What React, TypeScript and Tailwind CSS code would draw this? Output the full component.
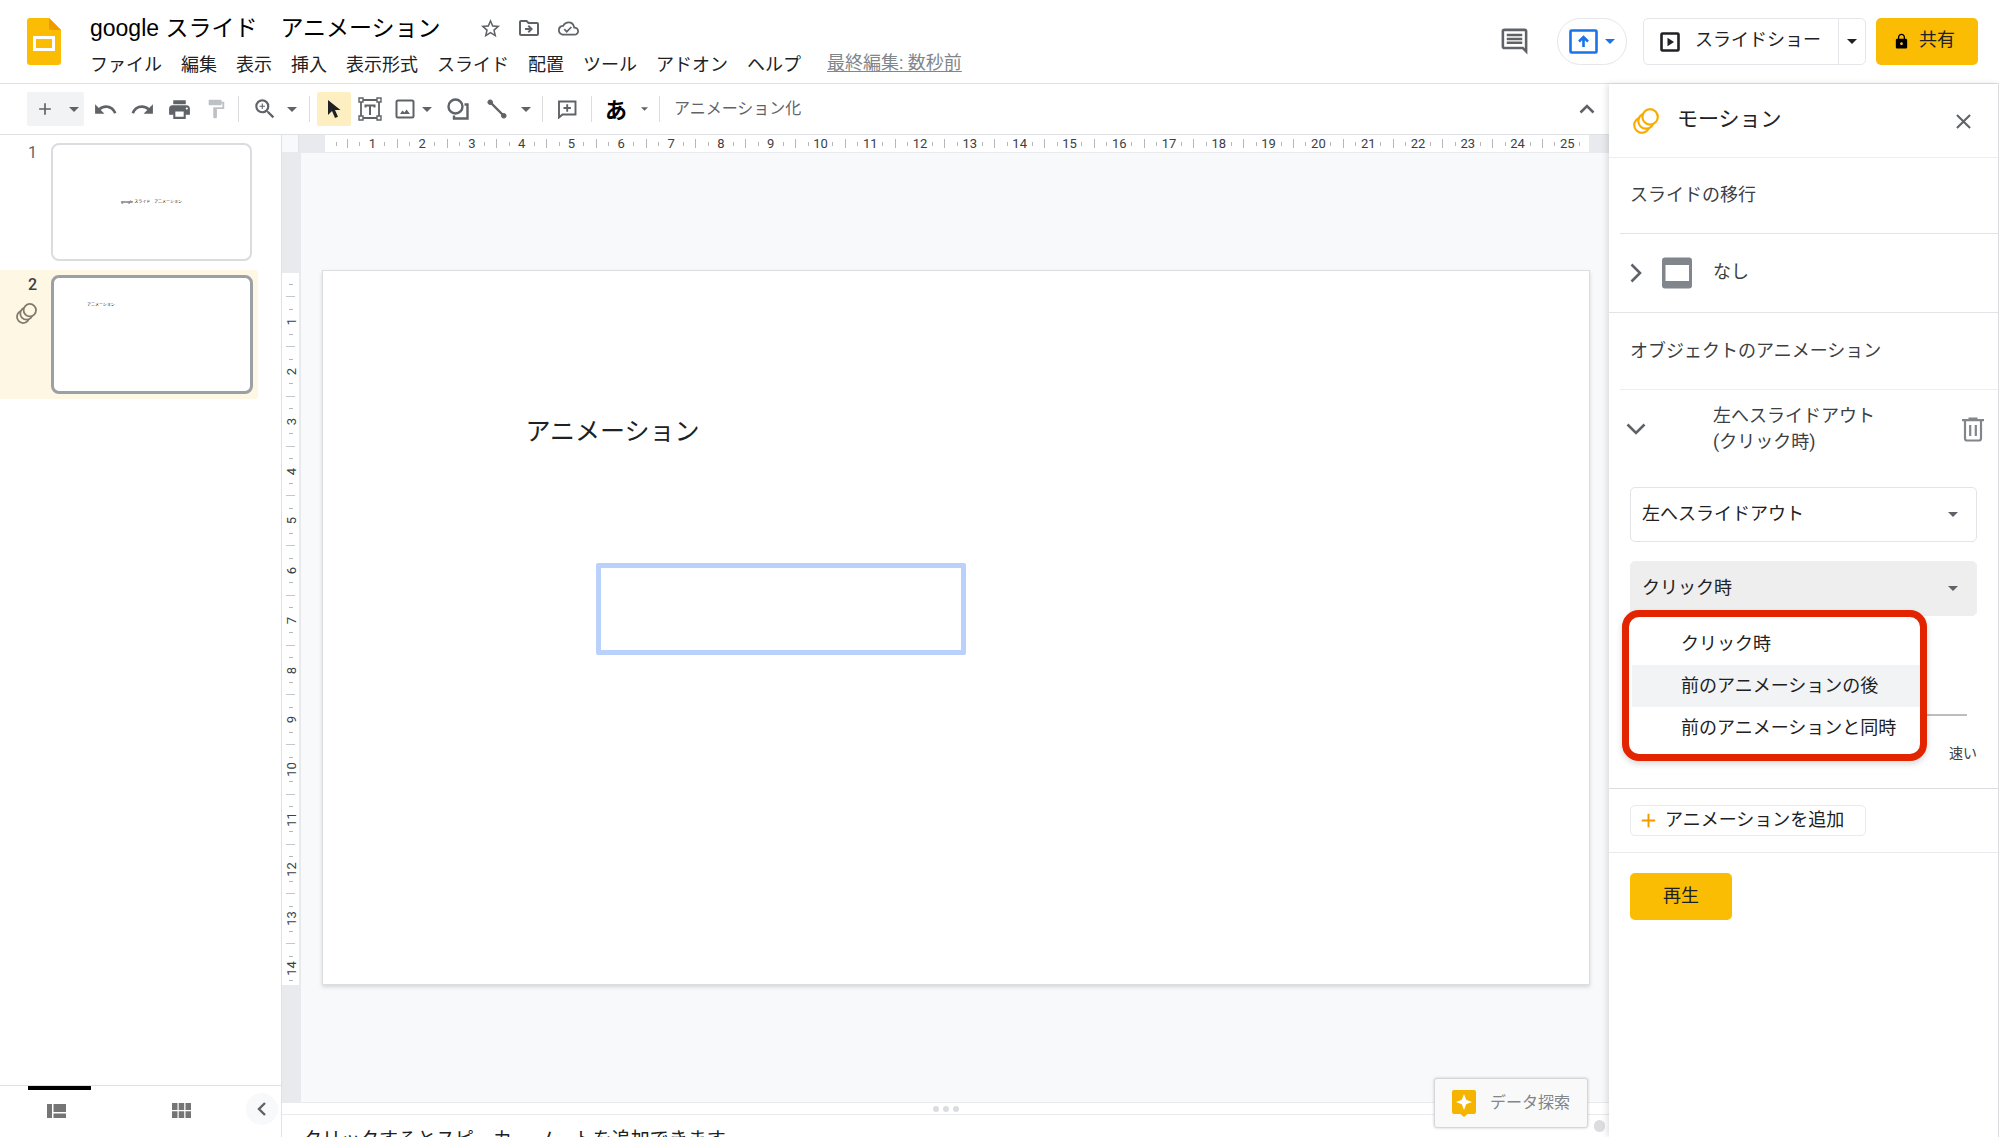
import React from "react";
import {
  MdAdd,
  MdClose,
  MdFormatPaint,
  MdLock,
  MdOutlineCloudDone,
  MdOutlineComment,
  MdOutlineDriveFileMove,
  MdPrint,
  MdRedo,
  MdStarBorder,
  MdUndo,
  MdZoomIn,
} from "react-icons/md";

function Caret({ className = "" }: { className?: string }) {
  return (
    <svg viewBox="0 0 10 5" className={`h-[5px] w-[10px] ${className}`} fill="currentColor" aria-hidden="true">
      <path d="M0 0h10L5 5z" />
    </svg>
  );
}

function SlidesLogo() {
  return (
    <svg viewBox="0 0 34 47" className="h-[47px] w-[34px] shrink-0" aria-label="スライド">
      <path d="M3 0h19l12 12v32a3 3 0 0 1-3 3H3a3 3 0 0 1-3-3V3a3 3 0 0 1 3-3z" fill="#fbbc04" />
      <path d="M22 0l12 12H24a2 2 0 0 1-2-2z" fill="#f29900" />
      <path d="M6 18h22v15H6zM9 21v9h16v-9z" fill="#fff" fillRule="evenodd" />
    </svg>
  );
}

function MotionIcon({ className = "" }: { className?: string }) {
  return (
    <svg viewBox="0 0 26 26" className={className} stroke="currentColor" strokeWidth="2.2" aria-hidden="true">
      <circle cx="8.9" cy="17.1" r="7.7" />
      <circle cx="13" cy="13" r="7.7" />
      <circle cx="17.1" cy="8.9" r="7.7" />
    </svg>
  );
}

function Separator({ className = "" }: { className?: string }) {
  return <span className={`h-[26px] w-px shrink-0 bg-[#dadce0] ${className}`} />;
}

function Tool({ label, className, children }: { label: string; className: string; children: React.ReactNode }) {
  return (
    <button type="button" aria-label={label} className={`flex h-[34px] shrink-0 items-center justify-center rounded-[2px] ${className}`}>
      {children}
    </button>
  );
}

const menus = ["ファイル", "編集", "表示", "挿入", "表示形式", "スライド", "配置", "ツール", "アドオン", "ヘルプ"];

function Header() {
  return (
    <header className="flex border-b border-[#dfe1e5] pr-[21px] pl-[27px]">
      <div className="pt-[18px]">
        <SlidesLogo />
      </div>
      <div className="ml-[29px] pt-3 pb-[6px]">
        <div className="flex h-8 items-center text-[#5f6368]">
          <h1 className="mr-[38px] font-['Liberation_Sans','Noto_Sans_CJK_JP',sans-serif] text-[23px] leading-8 whitespace-pre text-black">
            google スライド　アニメーション
          </h1>
          <button type="button" aria-label="スターを付ける" className="mr-[15px]">
            <MdStarBorder size={23} />
          </button>
          <button type="button" aria-label="移動" className="mr-[17px]">
            <MdOutlineDriveFileMove size={24} />
          </button>
          <button type="button" aria-label="保存状況">
            <MdOutlineCloudDone size={21} />
          </button>
        </div>
        <nav className="mt-[9px] flex h-6 items-center gap-[19px] text-[18px] leading-6 whitespace-nowrap text-[#202124]">
          {menus.map((m) => (
            <button type="button" key={m}>
              {m}
            </button>
          ))}
          <a href="#history" className="mb-[5px] ml-[7px] text-[#80868b] underline underline-offset-2">
            最終編集: 数秒前
          </a>
        </nav>
      </div>
      <div className="mt-[18px] ml-auto flex h-[47px] items-center">
        <button type="button" aria-label="コメント履歴" className="mr-[27px] text-[#5f6368]">
          <MdOutlineComment size={31} />
        </button>
        <button type="button" aria-label="会議で画面を共有" className="mr-[16px] flex h-full w-[70px] items-center justify-center gap-[7px] rounded-full border border-[#e4e6e9] text-[#1a73e8]">
          <svg viewBox="0 0 29 25" className="h-[25px] w-[29px]" fill="none" stroke="currentColor" strokeWidth="2.6" aria-hidden="true">
            <rect x="1.5" y="1.5" width="26" height="22" rx="1" />
            <path d="M14.500 18V8M10 12.500l4.500-4.500 4.500 4.500" />
          </svg>
          <Caret />
        </button>
        <div className="mr-[10px] flex h-full w-[223px] rounded-[5px] border border-[#e4e6e9] text-[#202124]">
          <button type="button" className="flex flex-1 items-center gap-[15px] pl-[16px] text-[18px] leading-6 whitespace-nowrap">
            <svg viewBox="0 0 20 20" className="h-5 w-5" fill="none" stroke="currentColor" strokeWidth="2.6" aria-hidden="true">
              <rect x="1.500" y="1.500" width="17" height="17" rx="1" />
              <path d="M7.500 5.800v8.400l6.500-4.200z" fill="currentColor" stroke="none" />
            </svg>
            <span className="pb-[4px]">スライドショー</span>
          </button>
          <button type="button" aria-label="スライドショーのオプション" className="flex w-[27px] items-center justify-center border-l border-[#e4e6e9]">
            <Caret />
          </button>
        </div>
        <button type="button" className="flex h-full w-[102px] items-center justify-center gap-[9px] rounded-[5px] bg-[#fbbc04] pr-[6px] text-[18px] leading-6 text-[#202124]">
          <MdLock size={17} className="text-black" />
          <span className="pb-[4px]">共有</span>
        </button>
      </div>
    </header>
  );
}

function Toolbar() {
  return (
    <div className="flex h-[51px] shrink-0 items-center border-b border-[#dfe1e5] pl-[27px] text-[#5f6368]">
      <div className="mr-[3px] flex w-[57px] rounded-[2px] bg-[#f1f3f4]">
        <Tool label="新しいスライド" className="w-[36px]">
          <MdAdd size={20} />
        </Tool>
        <Tool label="レイアウト" className="w-[21px]">
          <Caret />
        </Tool>
      </div>
      <Tool label="元に戻す" className="w-[37px]">
        <MdUndo size={25} />
      </Tool>
      <Tool label="やり直し" className="w-[37px]">
        <MdRedo size={25} />
      </Tool>
      <Tool label="印刷" className="w-[36px]">
        <MdPrint size={25} />
      </Tool>
      <Tool label="書式の貼り付け" className="w-[37px] text-[#bdc1c6]">
        <MdFormatPaint size={22} />
      </Tool>
      <Separator className="mr-[8px] ml-[4px]" />
      <Tool label="ズーム" className="w-[36px]">
        <MdZoomIn size={26} />
      </Tool>
      <Tool label="ズームのオプション" className="w-[18px]">
        <Caret />
      </Tool>
      <Separator className="mr-[7px] ml-[8px]" />
      <Tool label="選択" className="w-[34px] bg-[#feefc3] text-[#202124]">
        <svg viewBox="0 0 14 20" className="h-5 w-[14px]" fill="currentColor" aria-hidden="true">
          <path d="M1 1v15l4-4 3 7 3-1.300-3-6.700h5.500z" />
        </svg>
      </Tool>
      <Tool label="テキスト ボックス" className="w-[38px]">
        <svg viewBox="0 0 24 24" className="h-6 w-6" fill="none" stroke="currentColor" aria-hidden="true">
          <path d="M3 3h18v18H3z" strokeWidth="1.800" />
          <path d="M7 8.500h10M12 8.500V18M7.500 7.500v3M16.500 7.500v3" strokeWidth="2" />
          <path d="M1 1h4v4H1zM19 1h4v4h-4zM1 19h4v4H1zM19 19h4v4h-4z" fill="#fff" strokeWidth="1.400" />
        </svg>
      </Tool>
      <Tool label="画像を挿入" className="w-[32px]">
        <svg viewBox="0 0 20 20" className="h-5 w-5" fill="none" stroke="currentColor" strokeWidth="2" aria-hidden="true">
          <rect x="1.500" y="1.500" width="17" height="17" rx="1.500" />
          <path d="M5 15l2.500-3.500 2 2 2-3 3.500 4.500z" fill="currentColor" stroke="none" />
        </svg>
      </Tool>
      <Tool label="画像のオプション" className="w-[12px]">
        <Caret />
      </Tool>
      <Tool label="図形" className="w-[50px]">
        <svg viewBox="0 0 22 22" className="h-[22px] w-[22px]" fill="none" stroke="currentColor" strokeWidth="2.400" aria-hidden="true">
          <circle cx="8.500" cy="8.500" r="7" />
          <path d="M17.500 6.500H20.500V20.500H7v-3" />
        </svg>
      </Tool>
      <Tool label="線" className="w-[27px]">
        <svg viewBox="0 0 20 20" className="h-5 w-5" fill="currentColor" stroke="currentColor" aria-hidden="true">
          <path d="M3 3l14 14" strokeWidth="2.400" />
          <circle cx="3.200" cy="3.200" r="2.300" />
          <circle cx="16.800" cy="16.800" r="2.300" />
        </svg>
      </Tool>
      <Tool label="線のオプション" className="w-[32px]">
        <Caret />
      </Tool>
      <Separator />
      <Tool label="コメントを追加" className="w-[48px]">
        <svg viewBox="0 0 20 20" className="h-5 w-5" fill="none" stroke="currentColor" strokeWidth="1.900" aria-hidden="true">
          <path d="M2 2.500h16.500v13H5.500L2 18.500zM10.200 5.300v7.400M6.500 9h7.400" />
        </svg>
      </Tool>
      <Separator />
      <Tool label="入力ツール" className="w-[48px] pt-[3px] text-[22px] leading-6 font-bold text-black">
        あ
      </Tool>
      <Tool label="入力ツールのオプション" className="w-[8px]">
        <svg viewBox="0 0 10 5" className="h-1 w-[7px]" fill="currentColor" aria-hidden="true">
          <path d="M0 0h10L5 5z" />
        </svg>
      </Tool>
      <Separator className="ml-[11px]" />
      <button type="button" className="ml-[14px] text-[16px] leading-6 whitespace-nowrap">
        アニメーション化
      </button>
      <button type="button" aria-label="メニューを非表示" className="mr-[14px] ml-auto">
        <svg viewBox="0 0 16 10" className="h-[10px] w-4" fill="none" stroke="currentColor" strokeWidth="2.600" aria-hidden="true">
          <path d="M1.500 8.500L8 2l6.500 6.500" />
        </svg>
      </button>
    </div>
  );
}

function Filmstrip() {
  return (
    <aside className="flex w-[282px] shrink-0 flex-col border-r border-[#dfe1e5]">
      <div className="flex-1">
        <div className="mt-[8px] flex">
          <span className="w-[37px] pt-px text-right text-[16px] leading-[18px] text-[#5f6368]">1</span>
          <div className="ml-[14px] flex h-[118px] w-[201px] items-center justify-center rounded-[8px] border-2 border-[#dadce0] bg-white">
            <span className="font-['Liberation_Sans','Noto_Sans_CJK_JP',sans-serif] text-[4px] leading-none text-black">google スライド　アニメーション</span>
          </div>
        </div>
        <div className="mt-[9px] flex w-[258px] rounded-r-[4px] bg-[#fef7e3] py-[5px]">
          <div className="flex w-[37px] flex-col items-end pt-px">
            <span className="text-[16px] leading-[18px] font-medium text-[#3c4043]">2</span>
            <MotionIcon className="mt-[9px] h-[21px] w-[21px] fill-[#fef7e3] text-[#80796d]" />
          </div>
          <div className="ml-[14px] h-[119px] w-[202px] rounded-[8px] border-[3px] border-[#9aa0a6] bg-white pt-[25px] pl-[33px] text-[4px] leading-none text-black">
            アニメーション
          </div>
        </div>
      </div>
      <div className="flex h-[52px] items-start border-t border-[#dfe1e5] pl-[28px] text-[#757575]">
        <button type="button" aria-label="フィルムストリップ表示" className="flex h-[38px] w-[63px] items-center justify-start border-t-4 border-black pt-[7px] pl-[19px]">
          <svg viewBox="0 0 19 14" className="h-[14px] w-[19px]" fill="currentColor" aria-hidden="true">
            <path d="M0 0h5v14H0zM6.500 0H19v8H6.500zM6.500 9.500H19V14H6.500z" />
          </svg>
        </button>
        <button type="button" aria-label="グリッド表示" className="ml-[70px] flex h-[48px] w-[40px] items-center justify-center">
          <svg viewBox="0 0 19 15" className="h-[15px] w-[19px]" fill="currentColor" aria-hidden="true">
            <path d="M0 0h5.500v7H0zM6.700 0h5.500v7H6.700zM13.500 0H19v7h-5.500zM0 8.200h5.500V15H0zM6.700 8.200h5.500V15H6.700zM13.500 8.200H19V15h-5.500z" />
          </svg>
        </button>
        <button type="button" aria-label="サイドバーを閉じる" className="mt-[7px] mr-[3px] ml-auto flex h-8 w-8 items-center justify-center rounded-full bg-[#f8f9fa] text-[#5f6368]">
          <svg viewBox="0 0 9 14" className="mr-px h-[14px] w-[9px]" fill="none" stroke="currentColor" strokeWidth="2.400" aria-hidden="true">
            <path d="M8 1L2 7l6 6" />
          </svg>
        </button>
      </div>
    </aside>
  );
}

const QX = "h-[4px] w-px shrink-0 bg-[#b4b8bd]";
const QY = "h-px w-[4px] shrink-0 bg-[#b4b8bd]";

function HTicks({ n }: { n: number }) {
  return (
    <>
      <span className="flex w-0 justify-center"><i className="h-[9px] w-px shrink-0 bg-[#b4b8bd]" /></span>
      <span className="flex w-0 justify-center"><i className={QX} /></span>
      <span className="flex w-0 justify-center">{n}</span>
      <span className="flex w-0 justify-center"><i className={QX} /></span>
      <span className="w-0" />
    </>
  );
}

function VTicks({ n }: { n: number }) {
  return (
    <>
      <span className="flex h-0 items-center"><i className="h-px w-[9px] shrink-0 bg-[#c4c7cb]" /></span>
      <span className="flex h-0 items-center"><i className={QY} /></span>
      <span className="flex h-0 items-center"><span className="-rotate-90 pt-[2px]">{n}</span></span>
      <span className="flex h-0 items-center"><i className={QY} /></span>
      <span className="h-0" />
    </>
  );
}

const hNums = Array.from({ length: 24 }, (_, i) => i + 1);
const vNums = Array.from({ length: 13 }, (_, i) => i + 1);

function HorizontalRuler() {
  return (
    <div className="flex h-[18px] shrink-0 border-b border-[#e8eaed] text-[13px] leading-[17px] text-[#3c4043]">
      <div className="w-[17px] border-r border-[#e0e2e6] bg-[#f8f9fa]" />
      <div className="w-[26px] bg-[#e8eaed]" />
      <div className="flex min-w-0 flex-1 overflow-hidden bg-white">
        <div className="flex min-w-0 grow-[45] basis-0 items-center justify-center"><i className={QX} /></div>
        {hNums.map((n) => (
          <div key={n} className="flex min-w-0 grow-[100] basis-0 items-center justify-between"><HTicks n={n} /></div>
        ))}
        <div className="min-w-0 grow-[93] basis-0">
          <div className="flex h-full w-[107%] items-center justify-between"><HTicks n={25} /></div>
        </div>
      </div>
      <div className="w-[20px] bg-[#e8eaed]" />
    </div>
  );
}

function VerticalRuler() {
  return (
    <div className="flex w-[19px] shrink-0 flex-col border-r-2 border-[#e8eaed] bg-[#e8eaed] text-[13px] leading-[17px] text-[#3c4043]">
      <div className="grow-[120] basis-0" />
      <div className="flex min-h-0 grow-[712] basis-0 flex-col overflow-hidden bg-white">
        <div className="flex min-h-0 grow-[48] basis-0 items-center justify-center"><i className={QY} /></div>
        {vNums.map((n) => (
          <div key={n} className="flex min-h-0 grow-[100] basis-0 flex-col items-center justify-between"><VTicks n={n} /></div>
        ))}
        <div className="min-h-0 grow-[83] basis-0">
          <div className="flex h-[120%] flex-col items-center justify-between"><VTicks n={14} /></div>
        </div>
      </div>
      <div className="grow-[117] basis-0" />
    </div>
  );
}

function Editor() {
  return (
    <main className="relative flex min-w-0 flex-1 flex-col">
      <HorizontalRuler />
      <div className="flex min-h-0 flex-1">
        <VerticalRuler />
        <div className="flex min-w-0 flex-1 items-center bg-[#f8f9fb] pr-[19px] pl-[21px]">
          <div className="relative aspect-[1268/715] w-full border border-[#dcdee1] bg-white shadow-[0_2px_4px_rgba(0,0,0,0.14)]">
            <p className="absolute top-[20%] left-[16%] text-[25px] leading-9 text-[#202124]">アニメーション</p>
            <div className="absolute top-[41%] left-[21.600%] h-[12.800%] w-[29.200%] rounded-[2px] border-[5px] border-[#b9d1fb]" />
          </div>
        </div>
      </div>
      <div className="flex h-[13px] shrink-0 items-center justify-center gap-[4px] border-y border-[#e8eaed] bg-white">
        <i className="h-[6px] w-[6px] rounded-full bg-[#dadce0]" />
        <i className="h-[6px] w-[6px] rounded-full bg-[#dadce0]" />
        <i className="h-[6px] w-[6px] rounded-full bg-[#dadce0]" />
      </div>
      <div className="h-[22px] shrink-0 overflow-hidden bg-white pt-[11px] pl-[21px]">
        <p className="text-[19px] leading-7 text-[#202124]">クリックするとスピーカー ノートを追加できます</p>
      </div>
      <button type="button" className="absolute right-[21px] bottom-[9px] flex h-[50px] w-[154px] items-center rounded-[3px] border border-[#d5d7da] bg-[#f9f9f9] pl-[17px] text-[16px] leading-6 text-[#80868b] shadow-[0_0_3px_rgba(0,0,0,0.2)]">
        <svg viewBox="0 0 24 27" className="mr-[14px] h-[27px] w-6" aria-hidden="true">
          <path d="M2 0h20a2 2 0 0 1 2 2v20a2 2 0 0 1-2 2h-6.500L12 27l-3.500-3H2a2 2 0 0 1-2-2V2a2 2 0 0 1 2-2z" fill="#f4b400" />
          <path d="M12 4l2.200 5.800L20 12l-5.800 2.200L12 20l-2.200-5.800L4 12l5.800-2.200z" fill="#fff" />
        </svg>
        データ探索
      </button>
      <i className="absolute right-[4px] bottom-[5px] h-[12px] w-[11px] rounded-full bg-[#dadce0]" />
    </main>
  );
}

function SelectBox({ label, value, className }: { label: string; value: string; className: string }) {
  return (
    <div className="relative flex items-center">
      <select aria-label={label} defaultValue={value} className={`h-[55px] w-full appearance-none rounded-[5px] border pb-[2px] pl-[11px] text-[18px] leading-6 text-[#202124] ${className}`}>
        <option>{value}</option>
      </select>
      <Caret className="pointer-events-none absolute right-[19px] text-[#5f6368]" />
    </div>
  );
}

const options = ["クリック時", "前のアニメーションの後", "前のアニメーションと同時"];

function MotionPanel() {
  return (
    <aside className="relative z-10 flex w-[390px] shrink-0 flex-col border-r border-[#dadce0] bg-white text-[18px] leading-[26px] text-[#3c4043] shadow-[-2px_0_6px_rgba(0,0,0,0.12)]">
      <div className="flex h-[74px] items-center border-b border-[#eceef0] pr-[22px] pl-[24px]">
        <MotionIcon className="h-[26px] w-[26px] fill-white text-[#f9ab00]" />
        <h2 className="ml-[18px] pb-[3px] text-[21px] leading-7 text-[#202124]">モーション</h2>
        <button type="button" aria-label="閉じる" className="ml-auto pt-[2px] text-[#5f6368]">
          <MdClose size={25} />
        </button>
      </div>
      <h3 className="flex h-[75px] items-center pb-px pl-[21px]">スライドの移行</h3>
      <div className="ml-[11px] border-t border-[#e2e4e7]" />
      <button type="button" className="flex h-[78px] items-center pl-[21px] text-left">
        <svg viewBox="0 0 12 20" className="h-5 w-3 text-[#5f6368]" fill="none" stroke="currentColor" strokeWidth="2.600" aria-hidden="true">
          <path d="M1.500 1.500L10 10l-8.500 8.500" />
        </svg>
        <svg viewBox="0 0 32 32" className="ml-[19px] h-8 w-8 text-[#80868b]" fill="currentColor" aria-hidden="true">
          <path d="M4 .500h24a3 3 0 0 1 3 3v25a3 3 0 0 1-3 3H4a3 3 0 0 1-3-3v-25a3 3 0 0 1 3-3zM4.500 8v16h23.500V8z" fillRule="evenodd" />
        </svg>
        <span className="ml-[20px] pb-[2px]">なし</span>
      </button>
      <h3 className="flex h-[77px] items-center border-t border-[#e2e4e7] pl-[21px]">オブジェクトのアニメーション</h3>
      <div className="ml-[11px] border-t border-[#eceef0]" />
      <div className="flex h-[78px] items-center pr-[14px] pl-[17px]">
        <button type="button" aria-label="折りたたむ" className="text-[#5f6368]">
          <svg viewBox="0 0 20 12" className="h-3 w-5" fill="none" stroke="currentColor" strokeWidth="2.600" aria-hidden="true">
            <path d="M1.500 1.500L10 10l8.500-8.500" />
          </svg>
        </button>
        <p className="ml-[67px] pb-px">
          左へスライドアウト
          <br />
          (クリック時)
        </p>
        <button type="button" aria-label="削除" className="ml-auto text-[#80868b]">
          <svg viewBox="0 0 22 25" className="h-[25px] w-[22px]" fill="none" stroke="currentColor" strokeWidth="2.200" aria-hidden="true">
            <path d="M0 3.200h22M6.500 1.500h9M3 3.500v18a2 2 0 0 0 2 2h12a2 2 0 0 0 2-2v-18M8.200 8v11M13.800 8v11" />
          </svg>
        </button>
      </div>
      <div className="relative mt-[19px] flex h-[302px] flex-col gap-[19px] border-b border-[#dadce0] pr-[21px] pl-[21px]">
        <SelectBox label="アニメーションの種類" value="左へスライドアウト" className="border-[#e2e4e7] bg-white" />
        <SelectBox label="開始条件" value="クリック時" className="border-[#eeeeee] bg-[#eeeeee]" />
        <div className="mt-[79px] flex flex-col items-end">
          <div className="mr-[10px] h-[2px] w-[320px] bg-[#bdbdbd]" />
          <span className="mt-[27px] text-[14px] leading-5">速い</span>
        </div>
        <div role="listbox" aria-label="開始条件の選択肢" className="absolute top-[123px] left-[13px] w-[305px] rounded-[17px] border-[7px] border-[#e22400] bg-white pt-[6px] pb-[5px] shadow-[0_3px_6px_rgba(0,0,0,0.15)]">
          {options.map((o, i) => (
            <button
              type="button"
              role="option"
              aria-selected={i === 0}
              key={o}
              className={`ml-[3px] flex h-[42px] w-[288px] items-center pb-px pl-[49px] text-[#202124] ${i === 1 ? "bg-[#f1f3f4]" : ""}`}
            >
              {o}
            </button>
          ))}
        </div>
      </div>
      <div className="flex h-[64px] items-center border-b border-[#e8eaed] pl-[21px]">
        <button type="button" className="flex h-[31px] w-[236px] items-center rounded-[5px] border border-[#e8eaed] pl-[6px] text-[#202124]">
          <MdAdd size={23} className="mr-[5px] text-[#f29900]" />
          <span className="pb-[2px] whitespace-nowrap">アニメーションを追加</span>
        </button>
      </div>
      <button type="button" className="mt-[20px] ml-[21px] h-[47px] w-[102px] rounded-[5px] bg-[#fbbc04] pb-[2px] text-[#202124]">
        再生
      </button>
    </aside>
  );
}

export default function App() {
  return (
    <div className="flex h-screen flex-col overflow-hidden bg-white font-['Roboto','Noto_Sans_CJK_JP',sans-serif]">
      <Header />
      <div className="flex min-h-0 flex-1">
        <div className="flex min-w-0 flex-1 flex-col">
          <Toolbar />
          <div className="flex min-h-0 flex-1">
            <Filmstrip />
            <Editor />
          </div>
        </div>
        <MotionPanel />
      </div>
    </div>
  );
}
